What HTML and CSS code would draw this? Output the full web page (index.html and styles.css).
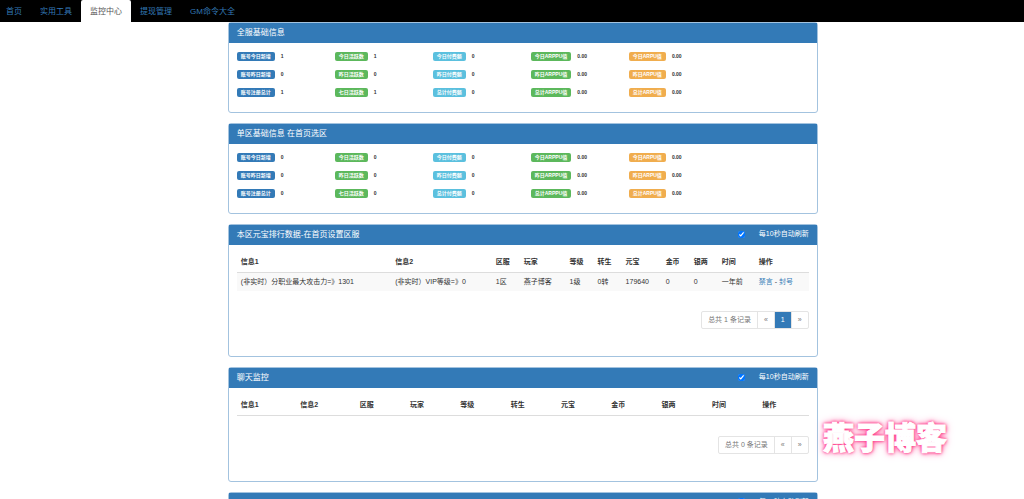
FILE: index.html
```html
<!DOCTYPE html>
<html lang="zh-CN">
<head>
<meta charset="utf-8">
<title>监控中心</title>
<link rel="stylesheet" href="styles.css">
</head>
<body>
<nav class="nav">
  <a href="#">首页</a>
  <a href="#">实用工具</a>
  <a href="#" class="active">监控中心</a>
  <a href="#">提现管理</a>
  <a href="#">GM命令大全</a>
</nav>
<main class="container">
  <section class="panel">
    <header class="panel-head"><h2>全服基础信息</h2></header>
    <div class="stats">
      <div><span class="label blue">账号今日新增</span><b>1</b></div>
      <div><span class="label green">今日活跃数</span><b>1</b></div>
      <div><span class="label cyan">今日付费额</span><b>0</b></div>
      <div><span class="label green">今日ARPPU值</span><b>0.00</b></div>
      <div><span class="label orange">今日ARPU值</span><b>0.00</b></div>
      <div class="first"><span class="label blue">账号昨日新增</span><b>0</b></div>
      <div><span class="label green">昨日活跃数</span><b>0</b></div>
      <div><span class="label cyan">昨日付费额</span><b>0</b></div>
      <div><span class="label green">昨日ARPPU值</span><b>0.00</b></div>
      <div><span class="label orange">昨日ARPU值</span><b>0.00</b></div>
      <div class="first"><span class="label blue">账号注册总计</span><b>1</b></div>
      <div><span class="label green">七日活跃数</span><b>1</b></div>
      <div><span class="label cyan">总计付费额</span><b>0</b></div>
      <div><span class="label green">总计ARPPU值</span><b>0.00</b></div>
      <div><span class="label orange">总计ARPU值</span><b>0.00</b></div>
    </div>
  </section>

  <section class="panel">
    <header class="panel-head"><h2>单区基础信息 在首页选区</h2></header>
    <div class="stats">
      <div><span class="label blue">账号今日新增</span><b>0</b></div>
      <div><span class="label green">今日活跃数</span><b>0</b></div>
      <div><span class="label cyan">今日付费额</span><b>0</b></div>
      <div><span class="label green">今日ARPPU值</span><b>0.00</b></div>
      <div><span class="label orange">今日ARPU值</span><b>0.00</b></div>
      <div class="first"><span class="label blue">账号昨日新增</span><b>0</b></div>
      <div><span class="label green">昨日活跃数</span><b>0</b></div>
      <div><span class="label cyan">昨日付费额</span><b>0</b></div>
      <div><span class="label green">昨日ARPPU值</span><b>0.00</b></div>
      <div><span class="label orange">昨日ARPU值</span><b>0.00</b></div>
      <div class="first"><span class="label blue">账号注册总计</span><b>0</b></div>
      <div><span class="label green">七日活跃数</span><b>0</b></div>
      <div><span class="label cyan">总计付费额</span><b>0</b></div>
      <div><span class="label green">总计ARPPU值</span><b>0.00</b></div>
      <div><span class="label orange">总计ARPU值</span><b>0.00</b></div>
    </div>
  </section>

  <section class="panel">
    <header class="panel-head">
      <h2>本区元宝排行数据-在首页设置区服</h2>
      <label class="refresh"><input type="checkbox" checked>每10秒自动刷新</label>
    </header>
    <div class="panel-body">
      <table class="table">
        <colgroup><col class="c-info1"><col class="c-info2"><col class="c-s"><col class="c-name"><col class="c-s"><col class="c-s"><col class="c-gold"><col class="c-s"><col class="c-s"><col class="c-time"><col></colgroup>
        <thead><tr><th>信息1</th><th>信息2</th><th>区服</th><th>玩家</th><th>等级</th><th>转生</th><th>元宝</th><th>金币</th><th>银两</th><th>时间</th><th>操作</th></tr></thead>
        <tbody><tr><td>(非实时）分职业最大攻击力=》1301</td><td>(非实时）VIP等级=》0</td><td>1区</td><td>燕子博客</td><td>1级</td><td>0转</td><td>179640</td><td>0</td><td>0</td><td>一年前</td><td><a href="#">禁言</a> - <a href="#">封号</a></td></tr></tbody>
      </table>
      <div class="pager"><span>总共 1 条记录</span><a href="#">«</a><a href="#" class="current">1</a><a href="#">»</a></div>
    </div>
  </section>

  <section class="panel">
    <header class="panel-head">
      <h2>聊天监控</h2>
      <label class="refresh"><input type="checkbox" checked>每10秒自动刷新</label>
    </header>
    <div class="panel-body">
      <table class="table">
        <colgroup><col class="c-wide"><col class="c-wide"><col><col><col><col><col><col><col><col><col></colgroup>
        <thead><tr><th>信息1</th><th>信息2</th><th>区服</th><th>玩家</th><th>等级</th><th>转生</th><th>元宝</th><th>金币</th><th>银两</th><th>时间</th><th>操作</th></tr></thead>
      </table>
      <div class="pager"><span>总共 0 条记录</span><a href="#">«</a><a href="#">»</a></div>
    </div>
  </section>

  <section class="panel">
    <header class="panel-head">
      <label class="refresh"><input type="checkbox" checked>每10秒自动刷新</label>
    </header>
  </section>
</main>
<div class="watermark">燕子博客</div>
</body>
</html>
```
FILE: styles.css
```css
* { box-sizing: border-box; }

body {
  margin: 0;
  background: #fff;
  color: #333;
  font: 7px/10px "Liberation Sans", "Noto Sans CJK SC", sans-serif;
}

a { color: #337ab7; text-decoration: none; }

.nav {
  display: flex;
  height: 22px;
  background: #000;
  font-size: 8px;
  line-height: 23px;
}
.nav a { padding: 0 9px; }
.nav a:first-child { padding-left: 6px; }
.nav .active {
  background: #fff;
  color: #555;
  border-radius: 2px 2px 0 0;
}

.container { width: 57.6%; margin-left: 22.25%; }

.panel {
  margin-bottom: 10px;
  border: 1px solid #a3c3df;
  border-radius: 3px;
}
.panel-head {
  display: flex;
  align-items: center;
  height: 20px;
  padding: 0 8px;
  background: #337ab7;
  color: #fff;
}
.panel-head h2 { margin: 0; font-size: 8px; font-weight: 400; }
.refresh {
  display: flex;
  align-items: center;
  gap: 14px;
  margin-left: auto;
  padding-bottom: 2px;
}
.refresh input { width: 7px; height: 7px; margin: 0; accent-color: #0075ff; }

.stats {
  display: grid;
  grid-template-columns: repeat(6, 1fr);
  grid-auto-rows: 18px;
  padding: 4px 0 11px;
  font-size: 5px;
}
.stats div { display: flex; align-items: center; gap: 6px; padding-left: 8px; }
.stats .first { grid-column-start: 1; }
.label {
  padding: 0 4px;
  border-radius: 2px;
  color: #fff;
  font-weight: 700;
  line-height: 9px;
}
.blue { background: #337ab7; }
.green { background: #5cb85c; }
.cyan { background: #5bc0de; }
.orange { background: #f0ad4e; }

.panel-body { padding: 8px 8px 27px; }

.table { width: 100%; table-layout: fixed; border-collapse: collapse; white-space: nowrap; }
.table th, .table td { height: 19px; padding: 0 4px; text-align: left; }
.table th { border-bottom: 1px solid #ddd; }
.table td { background: #f9f9f9; }
.c-wide { width: 10.4%; }
.c-info1 { width: 27%; }
.c-info2 { width: 17.6%; }
.c-s { width: 4.9%; }
.c-name { width: 8%; }
.c-gold { width: 7%; }
.c-time { width: 6.5%; }

.pager {
  display: flex;
  width: max-content;
  margin: 20px 0 0 auto;
  border: 1px solid #e4e4e4;
  border-radius: 2px;
  color: #777;
  line-height: 16px;
}
.pager span { padding: 0 6px; }
.pager a { padding: 0 6px; border-left: 1px solid #e4e4e4; color: #777; }
.pager .current { background: #337ab7; color: #fff; }

.watermark {
  position: absolute;
  left: 823px;
  top: 414px;
  color: #fff;
  font: 900 31px/44px "Noto Sans CJK SC", sans-serif;
  -webkit-text-stroke: 1px #fff;
  text-shadow: 0 0 3px #ff3e8c, 0 0 3px #ff3e8c, 0 0 5px #ff3e8c, 0 0 8px #ff7db3;
}
```
